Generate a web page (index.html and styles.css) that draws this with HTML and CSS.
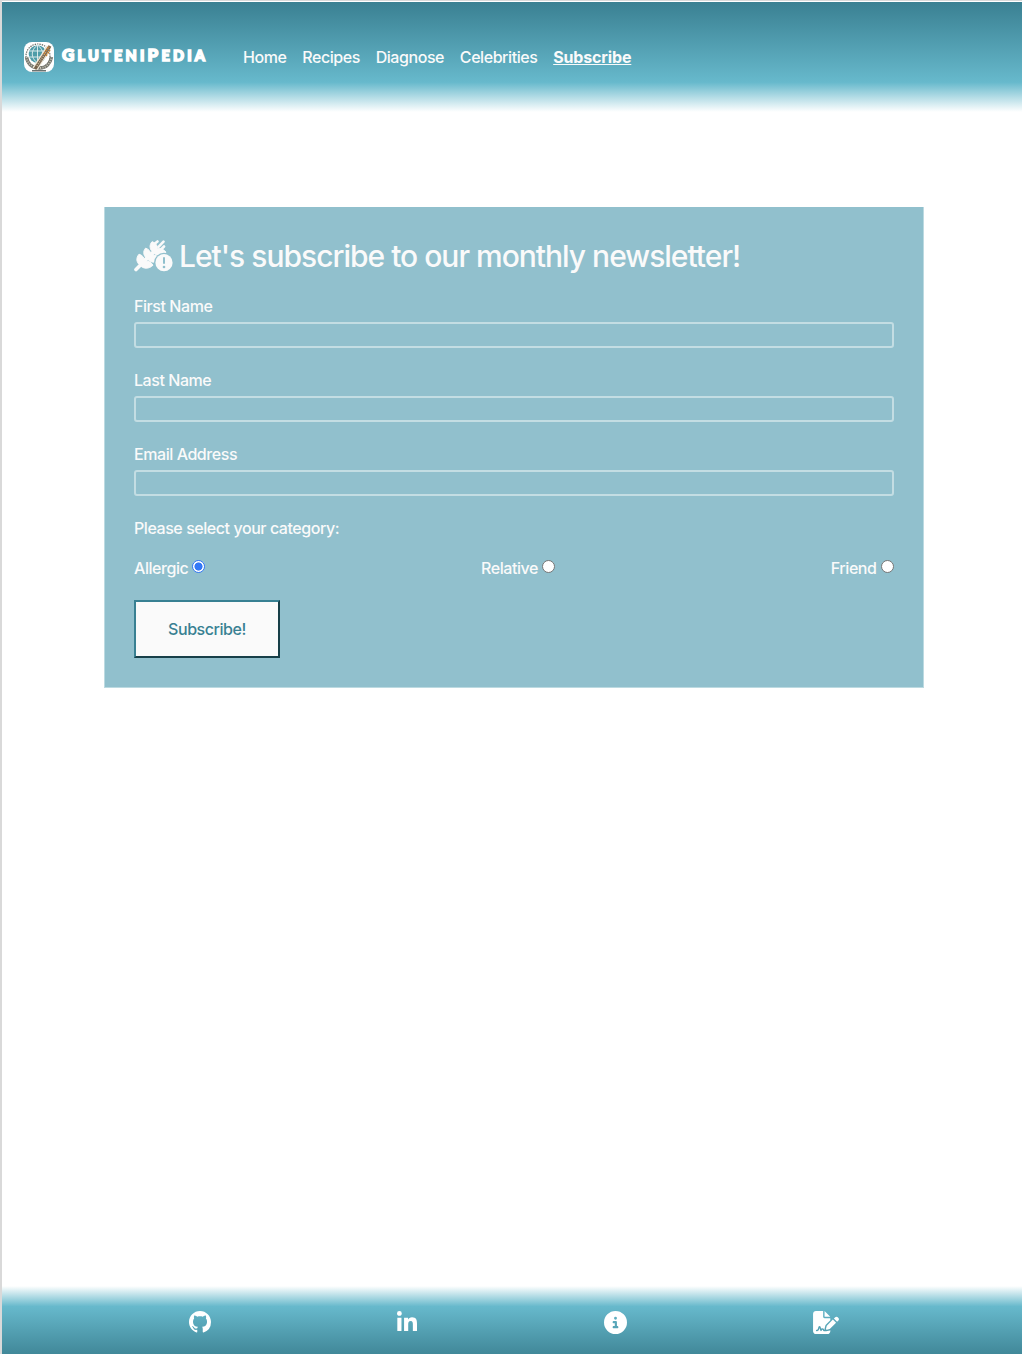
FILE: index.html
```html
<!DOCTYPE html>
<html lang="en">
<head>
<meta charset="utf-8">
<title>GluteniPedia</title>
<link rel="stylesheet" href="styles.css">
</head>
<body>
<header class="header">
  <a class="brand">
    <svg class="logo" viewBox="0 0 30 30">
      <rect width="30" height="30" rx="8" fill="#fff"/>
      <circle cx="14" cy="14" r="12" fill="none" stroke="#686c65" stroke-width="1.2" stroke-dasharray="1.4 1"/>
      <circle cx="13.5" cy="12" r="8.8" fill="#4e9ca8"/>
      <path d="M13.5 3v18M5 9h17M5 15h17M13.5 3c-7 5-7 13 0 18M13.5 3c7 5 7 13 0 18" fill="none" stroke="#e3efef" stroke-width=".9"/>
      <path d="M2.5 15c1 7 6 11 13 11s11-5 12-11" fill="none" stroke="#77776f" stroke-width="3.4"/>
      <path d="M2.5 15c1 7 6 11 13 11s11-5 12-11" fill="none" stroke="#c9c6ba" stroke-width="1.8" stroke-dasharray="1 1.4"/>
      <path d="M11 27 25 5" stroke="#eee6d6" stroke-width="5.4"/>
      <path d="M11 27 26 4" stroke="#75624c" stroke-width="3.2"/>
      <path d="m13 24 12-19" stroke="#c9b89c" stroke-width="1.6" stroke-dasharray="1 1.2"/>
      <path d="m20 12 5-8M22 14l4-6" stroke="#c68136" stroke-width="1.5" stroke-dasharray="2 1"/>
      <path d="M8 28.8h14" stroke="#46504f" stroke-width="1.2"/>
    </svg>
    <span class="brand-name"><span class="initial">G</span>LUTENI<span class="initial">P</span>EDIA</span>
  </a>
  <nav class="nav">
    <a>Home</a><a>Recipes</a><a>Diagnose</a><a>Celebrities</a><a class="active">Subscribe</a>
  </nav>
</header>
<main class="main">
  <form class="form">
    <h1 class="title">
      <svg class="wheat" viewBox="0 0 39 32" fill="currentColor">
        <path d="m2 29.500 6-6" stroke="currentColor" stroke-width="3.600" stroke-linecap="round"/>
        <g stroke="currentColor" stroke-width="1" stroke-linejoin="round">
        <path d="M5 14.200c3 .8 5.500 3.200 5.500 7 3.500-.6 6.500.8 8.500 4-4 4-10 4-13 0-4-3-4-7.500-1-11z"/>
        <path d="M11.500 8.200c3 .8 5.500 3.200 5.500 7 3.500-.6 8 .8 10 4-4 4-10.500 4-13.500 0-4-3-5-7.500-2-11z"/>
        <path d="M18 1.700c3 .8 5.500 3.200 5.500 7 3.500-.6 6.500.8 8.500 3.500-4 4-9.500 4-12.500.5-4-3-4.500-7.500-1.500-11z"/>
        </g>
        <path d="m21 3.500 2.500-2M24.500 6.800l5-5.200M27 9.500l3-3" stroke="currentColor" stroke-width="2.600" stroke-linecap="round"/>
        <path d="m8 23 15-14" stroke="currentColor" stroke-width="4"/>
        <circle cx="30" cy="22.700" r="10" fill="#91c0cd"/>
        <circle cx="30" cy="22.700" r="8.600"/>
        <path d="M30 18v5" stroke="#91c0cd" stroke-width="2" stroke-linecap="round"/>
        <circle cx="30" cy="27" r="1.300" fill="#91c0cd"/>
      </svg>
      <span>Let's subscribe to our monthly newsletter!</span>
    </h1>
    <label class="field"><span>First Name</span><input type="text"></label>
    <label class="field"><span>Last Name</span><input type="text"></label>
    <label class="field"><span>Email Address</span><input type="text"></label>
    <p class="question">Please select your category:</p>
    <div class="choices">
      <label><span>Allergic</span><input type="radio" name="category" checked></label>
      <label><span>Relative</span><input type="radio" name="category"></label>
      <label><span>Friend</span><input type="radio" name="category"></label>
    </div>
    <button class="submit" type="button">Subscribe!</button>
  </form>
</main>
<footer class="footer">
  <svg class="github" viewBox="0 0 16 16"><path d="M8 0C3.58 0 0 3.58 0 8c0 3.54 2.29 6.53 5.47 7.59.4.07.55-.17.55-.38 0-.19-.01-.82-.01-1.49-2.01.37-2.53-.49-2.69-.94-.09-.23-.48-.94-.82-1.13-.28-.15-.68-.52-.01-.53.63-.01 1.08.58 1.23.82.72 1.21 1.87.87 2.33.66.07-.52.28-.87.51-1.07-1.78-.2-3.64-.89-3.64-3.95 0-.87.31-1.59.82-2.15-.08-.2-.36-1.02.08-2.12 0 0 .67-.21 2.2.82.64-.18 1.32-.27 2-.27.68 0 1.36.09 2 .27 1.53-1.04 2.2-.82 2.2-.82.44 1.1.16 1.92.08 2.12.51.56.82 1.27.82 2.15 0 3.07-1.87 3.75-3.65 3.95.29.25.54.73.54 1.48 0 1.07-.01 1.93-.01 2.2 0 .21.15.46.55.38A8.013 8.013 0 0016 8c0-4.42-3.58-8-8-8z"/></svg>
  <svg class="linkedin" viewBox="0 0 448 448"><path d="M100.28 448H7.4V148.9h92.88zM53.79 108.1C24.09 108.1 0 83.5 0 53.8a53.79 53.79 0 0 1 107.58 0c0 29.7-24.1 54.3-53.79 54.3zM447.9 448h-92.68V302.4c0-34.7-.7-79.2-48.29-79.2-48.29 0-55.69 37.7-55.69 76.7V448h-92.78V148.9h89.08v40.8h1.3c12.4-23.5 42.69-48.3 87.88-48.3 94 0 111.28 61.9 111.28 142.3V448z"/></svg>
  <svg class="info" viewBox="0 0 512 512"><path d="M256 512A256 256 0 1 0 256 0a256 256 0 1 0 0 512zM216 336h24V272H216c-13.3 0-24-10.7-24-24s10.7-24 24-24h48c13.3 0 24 10.7 24 24v88h8c13.3 0 24 10.7 24 24s-10.7 24-24 24H216c-13.3 0-24-10.7-24-24s10.7-24 24-24zm40-208a32 32 0 1 1 0 64 32 32 0 1 1 0-64z"/></svg>
  <svg class="signature" viewBox="0 0 576 512"><path d="M64 0C28.7 0 0 28.7 0 64V448c0 35.3 28.7 64 64 64H320c35.3 0 64-28.7 64-64V428.7c-2.7 1.1-5.4 2-8.2 2.7l-60.1 15c-3 .7-6 1.2-9 1.4c-.9 .1-1.8 .2-2.7 .2H240c-6.1 0-11.6-3.4-14.3-8.8l-8.8-17.7c-1.7-3.4-5.1-5.5-8.8-5.5s-7.2 2.1-8.8 5.5l-8.8 17.7c-2.9 5.9-9.2 9.4-15.7 8.8s-12.1-5.1-13.9-11.3L144 381l-9.8 32.8c-6.1 20.3-24.8 34.2-46 34.2H80c-8.8 0-16-7.2-16-16s7.2-16 16-16h8.2c7.1 0 13.3-4.6 15.3-11.4l14.9-49.5c3.4-11.3 13.8-19.1 25.6-19.1s22.2 7.7 25.6 19.1l11.6 38.6c7.4-6.2 16.8-9.7 26.8-9.7c15.9 0 30.4 9 37.5 23.2l4.4 8.8h8.9c-3.1-8.8-3.7-18.4-1.4-27.8l15-60.1c2.8-11.3 8.6-21.5 16.8-29.7L384 203.6V160H256c-17.7 0-32-14.3-32-32V0H64zM256 0V128H384L256 0zM549.8 139.7c-15.6-15.6-40.9-15.6-56.6 0l-29.4 29.4 71 71 29.4-29.4c15.6-15.6 15.6-40.9 0-56.6l-14.4-14.4zM311.9 321c-4.1 4.1-7 9.2-8.4 14.9l-15 60.1c-1.4 5.5 .2 11.2 4.2 15.2s9.7 5.6 15.2 4.2l60.1-15c5.6-1.4 10.8-4.3 14.9-8.4L512.1 262.7l-71-71L311.9 321z"/></svg>
</footer>
</body>
</html>
```
FILE: styles.css
```css
* { box-sizing: border-box; }
body {
  margin: 0;
  height: 1354px;
  display: flex;
  flex-direction: column;
  border-left: 2px solid #d9d9d9;
  border-top: 1px solid #d9d9d9;
  padding-top: 1px;
  background: #fff;
  color: #fafafa;
  font: 450 16px/24px Inter, sans-serif;
  letter-spacing: -0.44px;
}
.header {
  height: 110px;
  display: flex;
  align-items: center;
  padding: 0 22px;
  background: linear-gradient(#3a8092, #67b9cc 73%, #fff);
}
.brand { display: flex; align-items: center; width: 219px; gap: 8px; }
.logo { width: 30px; height: 30px; flex: none; }
.brand-name { padding-bottom: 3px; font: 900 14.5px/24px Lato, sans-serif; letter-spacing: 3.2px; color: #fff; -webkit-text-stroke: 1.5px #fff; white-space: nowrap; }
.initial { font-size: 17px; }
.nav { display: flex; gap: 15.8px; }
.active { font-weight: 700; letter-spacing: -0.15px; text-decoration: underline; }
.main { flex: 1; padding: 95px 98px 0 102px; }
.form { height: 481px; padding: 30px 29px; border: solid #bcdae1; border-width: 0 1px 1px; background: #91c0cd; }
.title { display: flex; align-items: center; gap: 6px; height: 38px; margin: 0 0 19px; font-size: 30px; line-height: 38px; font-weight: 550; letter-spacing: -1px; white-space: nowrap; }
.wheat { width: 39px; height: 32px; flex: none; }
.field { display: block; margin-bottom: 20px; }
.field span { display: block; }
.field input { display: block; width: 100%; height: 26px; margin-top: 4px; border: 2px solid #c3dde3; border-radius: 3px; background: transparent; }
.question { margin: 0 0 16px; }
.choices { display: flex; justify-content: space-between; }
.choices label { display: flex; gap: 4px; }
.choices input { appearance: none; width: 13px; height: 13px; margin: 4px .5px 0 0; border: 1px solid #767676; border-radius: 50%; background: #fff; }
.choices input:checked { border-color: #3478f6; background: radial-gradient(circle, #3478f6 0 3.7px, #fff 4.4px); }
.submit { display: block; width: 146px; height: 58px; margin-top: 20px; border: 2px solid; border-color: #388092 #173f48 #173f48 #388092; background: #fafafa; color: #388092; font: inherit; letter-spacing: inherit; }
.footer { height: 68px; display: flex; align-items: flex-start; padding: 25px 183px 0 187px; justify-content: space-between; background: linear-gradient(#fff, #67b9cc 30%, #418899); color: #fff; fill: #fff; }
.github { width: 22px; height: 22px; }
.linkedin { width: 20px; height: 20px; }
.info { width: 23px; height: 23px; }
.signature { width: 26px; height: 23px; }
```
